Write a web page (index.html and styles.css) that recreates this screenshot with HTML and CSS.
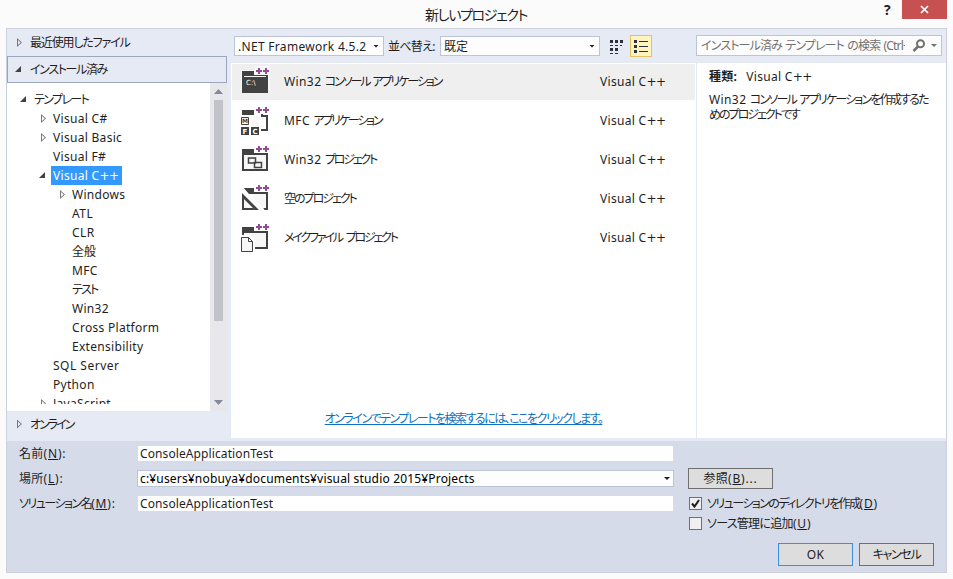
FILE: index.html
```
<!DOCTYPE html>
<html lang="ja">
    <head>
        <meta charset="utf-8">
        <title>新しいプロジェクト</title>
        <link rel="stylesheet" href="styles.css">
    </head>

    <body>
        <header class="titlebar">
            <h1 class="k-title">新しいプロジェクト</h1>
            <div class="window-buttons">
                <span class="help">?</span>
                <span class="close">
                    <svg width="9" height="9" viewBox="0 0 9 9"><path d="M1 1l7 7M8 1l-7 7" stroke="#fff" stroke-width="1.7"/></svg>
                </span>
            </div>
        </header>

        <main class="dialog">
            <div class="upper">
                <nav class="sidebar">
                    <div class="group recent"><i class="closed"></i><span class="k-recent">最近使用したファイル</span></div>
                    <div class="group installed"><i class="open"></i><span class="k-inst">インストール済み</span></div>
                    <div class="tree-box">
                        <ul class="tree">
                            <li><i class="open"></i><span class="k-tmpl">テンプレート</span></li>
                            <li class="l1"><i class="closed"></i><span>Visual C#</span></li>
                            <li class="l1"><i class="closed"></i><span>Visual Basic</span></li>
                            <li class="l1"><i></i><span>Visual F#</span></li>
                            <li class="l1"><i class="open"></i><span class="selected">Visual C<b class="pp">++</b></span></li>
                            <li class="l2"><i class="closed"></i><span>Windows</span></li>
                            <li class="l2"><i></i><span class="caps">ATL</span></li>
                            <li class="l2"><i></i><span class="caps">CLR</span></li>
                            <li class="l2"><i></i><span class="kanji">全般</span></li>
                            <li class="l2"><i></i><span>MFC</span></li>
                            <li class="l2"><i></i><span class="k-test">テスト</span></li>
                            <li class="l2"><i></i><span>Win32</span></li>
                            <li class="l2"><i></i><span>Cross Platform</span></li>
                            <li class="l2"><i></i><span>Extensibility</span></li>
                            <li class="l1"><i></i><span class="caps">SQL Server</span></li>
                            <li class="l1"><i></i><span>Python</span></li>
                            <li class="l1"><i class="closed"></i><span>JavaScript</span></li>
                        </ul>
                        <div class="scrollbar">
                            <svg width="9" height="5" viewBox="0 0 9 5"><path d="M0 5L4.500 0 9 5z" fill="#868999"/></svg>
                            <div class="track"><div class="thumb"></div></div>
                            <svg width="9" height="5" viewBox="0 0 9 5"><path d="M0 0h9L4.500 5z" fill="#868999"/></svg>
                        </div>
                    </div>
                    <div class="group online"><i class="closed"></i><span class="k-online">オンライン</span></div>
                </nav>

                <section class="center">
                    <div class="toolbar">
                        <div class="combo framework"><span>.NET Framework 4.5.2</span><b class="arrow"></b></div>
                        <label class="k-sort">並べ替え:</label>
                        <div class="combo sort"><span class="kanji">既定</span><b class="arrow"></b></div>
                        <svg class="view-small" width="14" height="15" viewBox="0 0 14 15" fill="#2b2f3e">
                            <path d="M1 1h3v3H1zM6 1h3v3H6zM11 1h3v3h-3zM1 9h3v3H1zM6 9h3v3H6z"/>
                            <path d="M1 6h3v1H1zM6 6h3v1H6zM11 6h2v1h-2zM1 14h3v1H1zM6 14h3v1H6z"/>
                        </svg>
                        <div class="view-list">
                            <svg width="14" height="13" viewBox="0 0 14 13" fill="#2b2f3e">
                                <path d="M0 0h3v3H0zM0 5h3v3H0zM0 10h3v3H0zM5 1h9v1H5zM5 6h9v1H5zM5 11h9v1H5z"/>
                            </svg>
                        </div>
                    </div>
                    <div class="list">
                        <div class="item current">
                            <svg class="icon" width="30" height="28" viewBox="0 0 30 28">
                                <path d="M0 3h14v-4h15v24H0z" fill="#f7f7f7"/>
                                <path d="M1 4h12v4h14v18H1z" fill="#424242"/>
                                <path d="M3 9.500h22" stroke="#f7f7f7"/>
                                <text x="5" y="18" class="prompt">C:\</text>
                                <path d="M14 4h8M18 0v8M21 4h8M25 0v8" stroke="#f7f7f7" stroke-width="4"/>
                                <path d="M15 4h6M18 1v6M22 4h6M25 1v6" stroke="#914c93" stroke-width="2"/>
                            </svg>
                            <span class="name k-console"><span class="latin">Win32 </span>コンソール アプリケーション</span><span>Visual C<b class="pp">++</b></span>
                        </div>
                        <div class="item">
                            <svg class="icon" width="30" height="28" viewBox="0 0 30 28">
                                <path d="M1 4h12v5H1z" fill="#424242"/>
                                <path d="M13 10h12v4H11v9h10z" fill="#f7f7f7"/>
                                <path d="M20 24h6V10h-5V8" fill="none" stroke="#424242" stroke-width="2"/>
                                <path d="M.5 11.500h7v7h-7z" fill="#fff" stroke="#424242"/>
                                <path d="M0 21h8v8H0zM10 21h8v8h-8z" fill="#424242"/>
                                <text x="1.100" y="17.200" class="mfc m">M</text>
                                <text x="1.500" y="27.600" class="mfc light">F</text>
                                <text x="11.500" y="27.600" class="mfc light">C</text>
                                <path d="M14 4h8M18 0v8M21 4h8M25 0v8" stroke="#fff" stroke-width="4"/>
                                <path d="M15 4h6M18 1v6M22 4h6M25 1v6" stroke="#914c93" stroke-width="2"/>
                            </svg>
                            <span class="name k-mfc"><span class="latin">MFC </span>アプリケーション</span><span>Visual C<b class="pp">++</b></span>
                        </div>
                        <div class="item">
                            <svg class="icon" width="30" height="28" viewBox="0 0 30 28">
                                <path d="M1 4h12v4h14v18H1z" fill="#424242"/>
                                <path d="M3 10h22v14H3z" fill="#f7f7f7"/>
                                <path d="M7.500 13h7v5h-7zM13.500 17.500h7v5h-7z" fill="#f7f7f7" stroke="#424242" stroke-width="1.500"/>
                                <path d="M14 4h8M18 0v8M21 4h8M25 0v8" stroke="#fff" stroke-width="4"/>
                                <path d="M15 4h6M18 1v6M22 4h6M25 1v6" stroke="#914c93" stroke-width="2"/>
                            </svg>
                            <span class="name k-win"><span class="latin">Win32 </span>プロジェクト</span><span>Visual C<b class="pp">++</b></span>
                        </div>
                        <div class="item">
                            <svg class="icon" width="30" height="28" viewBox="0 0 30 28">
                                <path d="M1 4h12v4h14v18H1z" fill="#424242"/>
                                <path d="M3 10h22v14H3z" fill="#f7f7f7"/>
                                <path d="M-2 4l23 24" stroke="#fff" stroke-width="7"/>
                                <path d="M3 4h10v6H8zM1 9l17 17h-4L1 13zM1 23v3h8l-2-2H3v-1z" fill="#424242"/>
                                <path d="M14 4h8M18 0v8M21 4h8M25 0v8" stroke="#fff" stroke-width="4"/>
                                <path d="M15 4h6M18 1v6M22 4h6M25 1v6" stroke="#914c93" stroke-width="2"/>
                            </svg>
                            <span class="name k-empty">空のプロジェクト</span><span>Visual C<b class="pp">++</b></span>
                        </div>
                        <div class="item">
                            <svg class="icon" width="30" height="28" viewBox="0 0 30 28">
                                <path d="M1 4h12v4h14v18H1z" fill="#424242"/>
                                <path d="M3 10h22v14H3z" fill="#f7f7f7"/>
                                <path d="M-1 12h11l4 5v12H-1z" fill="#fff"/>
                                <path d="M.5 14.500h7l4 4v10H.5zM7.500 14.500v4h4" fill="#f7f7f7" stroke="#424242"/>
                                <path d="M14 4h8M18 0v8M21 4h8M25 0v8" stroke="#fff" stroke-width="4"/>
                                <path d="M15 4h6M18 1v6M22 4h6M25 1v6" stroke="#914c93" stroke-width="2"/>
                            </svg>
                            <span class="name k-make">メイクファイル プロジェクト</span><span>Visual C<b class="pp">++</b></span>
                        </div>
                        <a class="online-link k-link">オンラインでテンプレートを検索するには、ここをクリックします。</a>
                    </div>
                </section>

                <aside class="details">
                    <div class="search">
                        <span class="k-search">インストール済み テンプレート の検索 (Ctrl+E)</span>
                        <svg width="14" height="13" viewBox="0 0 14 13"><circle cx="8.500" cy="4.800" r="3.500" fill="none" stroke="#717171" stroke-width="2"/><path d="M6 7.500L1.500 12" stroke="#717171" stroke-width="2.500"/></svg>
                        <b class="arrow"></b>
                    </div>
                    <div class="description">
                        <p><strong>種類:</strong>Visual C<b class="pp">++</b></p>
                        <p class="k-desc"><span class="latin">Win32 </span>コンソール アプリケーションを作成するた<br><span class="k-desc2">めのプロジェクトです</span></p>
                    </div>
                </aside>
            </div>

            <form class="lower">
                <div class="fields">
                    <label>名前<span class="key">(<u>N</u>):</span></label><div class="field">ConsoleApplicationTest</div>
                    <label>場所<span class="key">(<u>L</u>):</span></label><div class="combo path"><span>c:¥users¥nobuya¥documents¥visual studio 2015¥Projects</span><b class="arrow"></b></div>
                    <label class="k-sol">ソリューション名<span class="key">(<u>M</u>):</span></label><div class="field">ConsoleApplicationTest</div>
                </div>
                <div class="options">
                    <div class="button browse">参照<span class="key">(<u>B</u>)...</span></div>
                    <div class="check">
                        <span class="box"><svg width="11" height="11" viewBox="0 0 11 11"><path d="M2 5.500L4.500 8.500 9 2" fill="none" stroke="#1e1e1e" stroke-width="2"/></svg></span>
                        <span class="k-dir">ソリューションのディレクトリを作成<span class="key">(<u>D</u>)</span></span>
                    </div>
                    <div class="check">
                        <span class="box"></span>
                        <span class="k-scc">ソース管理に追加<span class="key">(<u>U</u>)</span></span>
                    </div>
                    <div class="actions">
                        <div class="button default">OK</div>
                        <div class="button k-cancel">キャンセル</div>
                    </div>
                </div>
            </form>
        </main>
    </body>
</html>
```
FILE: styles.css
```
* {
    box-sizing: border-box;
}
body {
    margin: 0;
    height: 579px;
    overflow: hidden;
    background: #fbfbfb;
    color: #1e1e1e;
    font: 12px/19px "Noto Sans", "Noto Sans CJK JP", sans-serif;
    font-feature-settings: "palt";
    letter-spacing: 0.3px;
    white-space: nowrap;
}
svg {
    display: block;
    flex: none;
}
ul, p, h1 {
    margin: 0;
    padding: 0;
}
u {
    text-underline-offset: 1px;
}

.titlebar {
    display: grid;
    grid-template-columns: 1fr auto 1fr;
    height: 28px;
    padding-right: 6px;
}
.titlebar h1 {
    grid-column: 2;
    padding-left: 5px;
    font-size: 14px;
    font-weight: normal;
    line-height: 29px;
}
.window-buttons {
    display: flex;
    justify-content: flex-end;
}
.help {
    width: 18px;
    font: bold 14px/19px "Open Sans", sans-serif;
}
.close {
    display: flex;
    align-items: center;
    justify-content: center;
    width: 45px;
    height: 19px;
    background: #c75050;
}

.dialog {
    width: 941px;
    height: 545px;
    margin-left: 6px;
    border: 1px solid #cdd1dc;
    background: #d6dbe9;
}
.upper {
    display: flex;
    height: 412px;
    background: #e6eaf5;
}

.sidebar {
    width: 220px;
    margin-right: 4px;
}
.group {
    display: flex;
    align-items: center;
    height: 27px;
    padding-left: 8px;
}
.group i {
    margin-right: 7px;
}
.installed {
    padding-left: 7px;
    border: 1px solid #9aa7bd;
}
.online {
    height: 26px;
}
i {
    flex: none;
    width: 8px;
    height: 9px;
}
i.open {
    background: #424242;
    clip-path: polygon(6px 1px, 6px 7px, 0 7px);
}
i.closed {
    background: #777;
    clip-path: polygon(evenodd, 2px 0, 7px 4.5px, 2px 9px, 2px 0, 3px 2px, 3px 7px, 5.7px 4.5px, 3px 2px);
}
.tree-box {
    display: flex;
    height: 328px;
    background: #fff;
}
.tree {
    flex: 1;
    height: 321px;
    padding-top: 7px;
    overflow: hidden;
    list-style: none;
}
.tree li {
    display: flex;
    align-items: center;
    height: 19px;
    padding-left: 13px;
}
.tree span {
    padding: 0 3px 0 2px;
    margin-left: 4px;
}
.tree .l1 {
    padding-left: 32px;
}
.tree .l2 {
    padding-left: 51px;
}
.tree .selected {
    background: #3399ff;
    color: #fff;
}
.scrollbar {
    display: flex;
    flex-direction: column;
    align-items: center;
    width: 17px;
    padding: 6px 0;
    background: #e8e8ec;
}
.track {
    flex: 1;
    padding-top: 6px;
}
.thumb {
    width: 9px;
    height: 221px;
    background: #c2c3c9;
}

.center {
    display: flex;
    flex-direction: column;
    width: 465px;
}
.toolbar {
    display: flex;
    align-items: center;
    height: 34px;
    padding-left: 3px;
}
.combo {
    display: flex;
    align-items: center;
    height: 20px;
    padding: 0 4px 0 3px;
    border: 1px solid #bcc5d8;
    background: #fdfdfe;
}
.combo span {
    flex: 1;
    overflow: hidden;
}
.arrow {
    flex: none;
    width: 6px;
    height: 3px;
    background: #1e1e1e;
    clip-path: polygon(0 0, 100% 0, 50% 100%);
}
.framework {
    width: 150px;
}
.framework .arrow {
    margin-left: 4px;
}
.toolbar label {
    width: 48px;
    margin: 0 4px;
}
.sort {
    width: 160px;
}
.view-small {
    margin: 0 6px 0 9px;
}
.view-list {
    display: flex;
    align-items: center;
    justify-content: center;
    width: 22px;
    height: 22px;
    margin-left: 1px;
    border: 1px solid #e5c365;
    background: #fdf4bf;
}
.list {
    display: flex;
    flex: 1;
    flex-direction: column;
    gap: 3px;
    margin-bottom: 3px;
    padding: 1px 1px 10px;
    background: #fff;
}
.item {
    display: flex;
    align-items: center;
    height: 36px;
    padding: 0 0 2px 9px;
}
.current {
    background: #efefef;
}
.icon {
    overflow: visible;
}
.prompt {
    fill: #fff;
    font: 7px "DejaVu Sans", sans-serif;
    letter-spacing: 0;
}
.mfc {
    fill: #424242;
    font: bold 7px "DejaVu Sans", sans-serif;
    letter-spacing: 0;
}
.mfc.m {
    font-size: 6px;
}
.mfc.light {
    fill: #fff;
}
.name {
    width: 316px;
    margin-left: 13px;
}
.online-link {
    align-self: center;
    margin-top: auto;
    color: #0e70c0;
    text-decoration: underline;
}

.details {
    width: 250px;
}
.search {
    display: flex;
    align-items: center;
    width: 246px;
    height: 21px;
    margin: 6px 0 7px;
    padding: 0 4px;
    border: 1px solid #bcc5d8;
    background: #fcfcfc;
    color: #717171;
}
.search span {
    width: 206px;
    overflow: hidden;
}
.search svg {
    margin: 0 5px 0 7px;
}
.search .arrow {
    background: #717171;
}
.description {
    height: 375px;
    margin-left: 1px;
    padding: 4px 0 0 12px;
    background: #fff;
}
.description strong {
    margin-right: 9px;
}
.k-desc {
    margin-top: 6px;
    line-height: 15px;
}

.lower {
    display: flex;
}
.fields {
    display: grid;
    grid-template-columns: 118px 537px;
    grid-auto-rows: 25px;
    align-items: center;
    align-content: start;
    width: 669px;
    padding-left: 12px;
}
.field {
    height: 15px;
    margin: 0 1px;
    padding-left: 2px;
    background: #fff;
    letter-spacing: 0.1px;
    line-height: 15px;
}
.path {
    height: 17px;
    padding: 0 3px 0 2px;
    color: #000;
    letter-spacing: 0.17px;
    line-height: 15px;
}
.options {
    width: 258px;
    padding: 27px 0 0 12px;
}
.button {
    width: 75px;
    height: 23px;
    border: 1px solid #707070;
    background: #dddddd;
    line-height: 21px;
    text-align: center;
}
.browse {
    width: 85px;
    height: 21px;
    margin-bottom: 4px;
    line-height: 19px;
}
.check {
    display: flex;
    align-items: center;
    height: 20px;
    padding-left: 1px;
}
.box {
    width: 13px;
    height: 13px;
    margin-right: 5px;
    border: 1px solid #707070;
    background: #f0f0f0;
}
.actions {
    display: flex;
    gap: 6px;
    margin: 10px 0 0 90px;
}
.default {
    border-color: #3c8fdc;
}

/* Narrow UI kana: tracking per label */
.kanji { letter-spacing: 0; }
.latin { letter-spacing: 0.4px; word-spacing: 0; }
.caps { letter-spacing: 0.5px; }
.key { letter-spacing: 0.8px; }
.pp {
    font: 12px/1 "DejaVu Sans", sans-serif;
    letter-spacing: -0.4px;
}
.k-title { letter-spacing: -1.35px; }
.k-recent { letter-spacing: -1.15px; }
.k-inst { letter-spacing: -1.35px; }
.k-tmpl { letter-spacing: -1.6px; }
.k-test { letter-spacing: -1.8px; }
.k-online { letter-spacing: -2px; }
.k-sort { letter-spacing: -0.7px; }
.k-console { letter-spacing: -2.1px; word-spacing: 2px; }
.k-mfc { letter-spacing: -2.2px; }
.k-win { letter-spacing: -2.2px; }
.k-empty { letter-spacing: -2px; }
.k-make { letter-spacing: -2.2px; word-spacing: 3px; }
.k-link { letter-spacing: -1.5px; }
.k-search { letter-spacing: -0.85px; word-spacing: 1px; }
.k-desc { letter-spacing: -1.8px; word-spacing: 2px; }
.k-desc2 { letter-spacing: -2px; }
.k-sol { letter-spacing: -1.5px; }
.k-dir { letter-spacing: -1.55px; }
.k-scc { letter-spacing: -0.7px; }
.k-cancel { letter-spacing: -1.3px; }
```
